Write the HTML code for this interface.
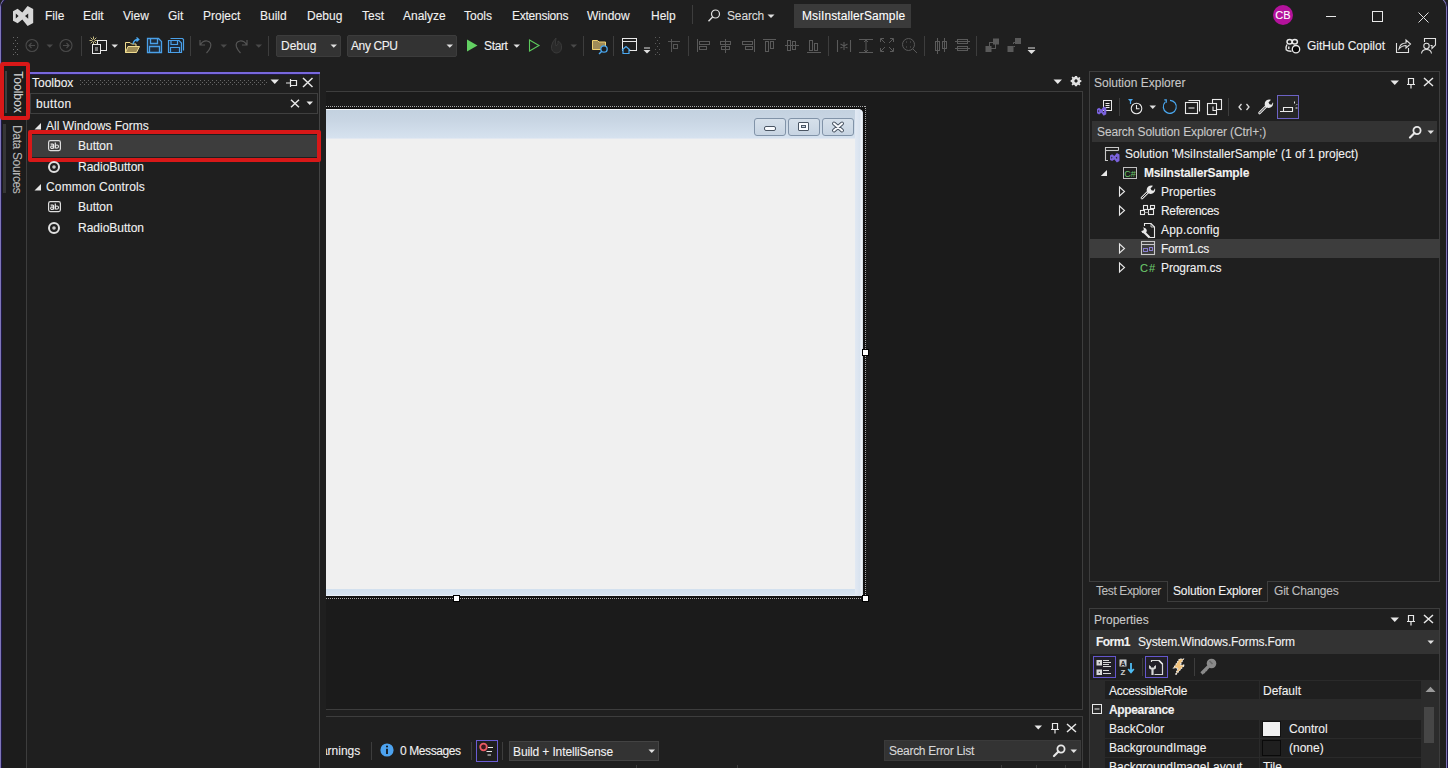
<!DOCTYPE html>
<html><head><meta charset="utf-8">
<style>
*{box-sizing:border-box;margin:0;padding:0}
html,body{width:1448px;height:768px;overflow:hidden;background:#1f1f1f;font-family:"Liberation Sans",sans-serif;font-size:12px;color:#f1f1f1}
.a{position:absolute}
.t{position:absolute;line-height:16px;white-space:nowrap;font-size:12px;-webkit-text-stroke:0.1px currentColor}
.ln{position:absolute;background:#3d3d3d}
svg{position:absolute;overflow:visible}
</style></head><body>

<!-- window border -->
<div class="a" style="left:0;top:-3px;width:20px;height:772px;border-left:1px solid #7f75b8;border-top:1px solid #7f75b8;border-top-left-radius:10px"></div>
<div class="a" style="left:1px;top:-2px;width:19px;height:771px;border-left:1px solid #1e1848;border-top:1px solid #1e1848;border-top-left-radius:9px"></div>
<div class="a" style="left:1427px;top:-3px;width:20px;height:772px;border-right:1px solid #7f75b8;border-top:1px solid #7f75b8;border-top-right-radius:10px"></div>
<div class="a" style="left:1428px;top:-3px;width:20px;height:772px;border-right:1px solid #1e1848;border-top:1px solid #1e1848;border-top-right-radius:10px;clip-path:inset(0 0 0 18px)"></div>

<!-- MENU BAR -->
<div id="menu">
  <svg style="left:0;top:0" width="40" height="30"><path fill="#d8d8d8" fill-rule="evenodd" d="M13 11.2 L17.6 8.8 L22.3 12.6 L27.6 6 L33.2 9 L33.2 23 L27.6 26 L22.3 19.6 L17.6 23.2 L13 20.8 Z M15.8 13.6 L18.6 16 L15.8 18.4 Z M28.2 13.4 L25 16 L28.2 18.8 Z"/></svg>
  <div class="t" style="left:45px;top:8px">File</div>
  <div class="t" style="left:83px;top:8px">Edit</div>
  <div class="t" style="left:123px;top:8px">View</div>
  <div class="t" style="left:168px;top:8px">Git</div>
  <div class="t" style="left:203px;top:8px">Project</div>
  <div class="t" style="left:260px;top:8px">Build</div>
  <div class="t" style="left:307px;top:8px">Debug</div>
  <div class="t" style="left:362px;top:8px">Test</div>
  <div class="t" style="left:403px;top:8px">Analyze</div>
  <div class="t" style="left:464px;top:8px">Tools</div>
  <div class="t" style="left:512px;top:8px;letter-spacing:-0.25px">Extensions</div>
  <div class="t" style="left:587px;top:8px">Window</div>
  <div class="t" style="left:651px;top:8px">Help</div>
  <div class="ln" style="left:692px;top:5px;width:1px;height:19px"></div>
  <svg style="left:706px;top:8px" width="16" height="16"><circle cx="9.5" cy="6" r="4" fill="none" stroke="#e0e0e0" stroke-width="1.2"/><path d="M6.6 9 L2.5 13.2" stroke="#e0e0e0" stroke-width="1.4"/></svg>
  <div class="t" style="left:727px;top:8px;letter-spacing:-0.15px;color:#dadada">Search</div>
  <svg style="left:767px;top:14px" width="8" height="5"><path d="M0.5 0.5 L7.5 0.5 L4 4 Z" fill="#e0e0e0"/></svg>
  <div class="a" style="left:794px;top:4px;width:117px;height:24px;background:#3a3a3a"></div>
  <div class="t" style="left:802px;top:8px;color:#fff;letter-spacing:0.1px">MsiInstallerSample</div>
  <div class="a" style="left:1273px;top:5px;width:20px;height:20px;border-radius:50%;background:#b4129c"></div>
  <div class="t" style="left:1273px;top:7px;width:20px;text-align:center;font-size:11px;color:#fff">CB</div>
  <div class="a" style="left:1326px;top:16px;width:10px;height:1px;background:#e8e8e8"></div>
  <div class="a" style="left:1372px;top:11px;width:11px;height:11px;border:1px solid #e8e8e8"></div>
  <svg style="left:1418px;top:12px" width="11" height="11"><path d="M0.5 0.5 L10.5 10.5 M10.5 0.5 L0.5 10.5" stroke="#e0e0e0" stroke-width="1"/></svg>
</div>

<!-- TOOLBAR -->
<div id="toolbar">
  <svg style="left:12px;top:36px" width="8" height="20">
    <g fill="#6a6a6a"><rect x="1" y="1" width="1" height="1"/><rect x="5" y="1" width="1" height="1"/><rect x="3" y="4" width="1" height="1"/><rect x="1" y="7" width="1" height="1"/><rect x="5" y="7" width="1" height="1"/><rect x="3" y="10" width="1" height="1"/><rect x="1" y="13" width="1" height="1"/><rect x="5" y="13" width="1" height="1"/><rect x="3" y="16" width="1" height="1"/><rect x="1" y="18" width="1" height="1"/><rect x="5" y="18" width="1" height="1"/></g>
  </svg>
  <svg style="left:24px;top:37px" width="18" height="18"><circle cx="8" cy="8.5" r="6" fill="none" stroke="#4a4a4a" stroke-width="1.1"/><path d="M11 8.5 L5 8.5 M7.5 6 L5 8.5 L7.5 11" fill="none" stroke="#4a4a4a" stroke-width="1.1"/></svg>
  <svg style="left:46px;top:44px" width="8" height="5"><path d="M0.5 0.5 L7 0.5 L3.75 3.8 Z" fill="#4a4a4a"/></svg>
  <svg style="left:58px;top:37px" width="18" height="18"><circle cx="8" cy="8.5" r="6" fill="none" stroke="#4a4a4a" stroke-width="1.1"/><path d="M5 8.5 L11 8.5 M8.5 6 L11 8.5 L8.5 11" fill="none" stroke="#4a4a4a" stroke-width="1.1"/></svg>
  <div class="ln" style="left:81px;top:36px;width:1px;height:20px"></div>
  <svg style="left:89px;top:36px" width="20" height="20">
    <path d="M4.5 0.5 V8.5 M0.5 4.5 H8.5 M1.7 1.7 L7.3 7.3 M7.3 1.7 L1.7 7.3" stroke="#f4e6a0" stroke-width="0.8"/><circle cx="4.5" cy="4.5" r="1.2" fill="#1f1f1f"/>
    <rect x="8.5" y="4.5" width="9" height="10" fill="#1f1f1f" stroke="#e8e8e8"/>
    <rect x="3.5" y="8.5" width="8" height="9" fill="#1f1f1f" stroke="#e8e8e8"/>
    <rect x="6" y="11" width="3" height="4" fill="#7a7a7a"/>
  </svg>
  <svg style="left:111px;top:44px" width="8" height="5"><path d="M0.5 0.5 L7 0.5 L3.75 3.8 Z" fill="#e0e0e0"/></svg>
  <svg style="left:123px;top:36px" width="20" height="20">
    <path d="M2.5 6.5 H7 L8.5 8 H13 V16.5 H2.5 Z" fill="#2a261c" stroke="#f0dc90"/>
    <path d="M2.5 16.5 L5 10.5 H16.5 L13.5 16.5 Z" fill="#9c8a55" stroke="#f0dc90"/>
    <path d="M10 8 Q11 3.5 15 3.5 M13.5 1.5 L15.8 3.5 L13.5 5.5" fill="none" stroke="#4aa8f0" stroke-width="1.3"/>
  </svg>
  <svg style="left:146px;top:37px" width="18" height="18">
    <path d="M1.5 1.5 H12.5 L15.5 4.5 V15.5 H1.5 Z" fill="#1f2a38" stroke="#4aa0e8" stroke-width="1.3"/>
    <path d="M4.5 1.5 V6.5 H11.5 V1.5 M3.5 15.5 V9.5 H13.5 V15.5" fill="none" stroke="#4aa0e8" stroke-width="1.3"/>
  </svg>
  <svg style="left:167px;top:37px" width="18" height="18">
    <path d="M3.5 1.5 H15.5 L16.5 2.5 V13.5" fill="none" stroke="#4aa0e8" stroke-width="1.2"/>
    <path d="M1.5 3.5 H12 L14.5 6 V15.5 H1.5 Z" fill="#1f2a38" stroke="#4aa0e8" stroke-width="1.2"/>
    <path d="M4 3.5 V7.5 H10.5 V3.5 M3.5 15.5 V10.5 H12.5 V15.5" fill="none" stroke="#4aa0e8" stroke-width="1.2"/>
  </svg>
  <div class="ln" style="left:190px;top:36px;width:1px;height:20px"></div>
  <svg style="left:197px;top:37px" width="18" height="18"><path d="M3 3 V8 H8 M3.5 7.5 Q6 3.5 10 4 Q15 5 13.5 10 Q12.5 13 9.5 16" fill="none" stroke="#555" stroke-width="1.2"/></svg>
  <svg style="left:220px;top:44px" width="8" height="5"><path d="M0.5 0.5 L7 0.5 L3.75 3.8 Z" fill="#4a4a4a"/></svg>
  <svg style="left:232px;top:37px" width="18" height="18"><path d="M15 3 V8 H10 M14.5 7.5 Q12 3.5 8 4 Q3 5 4.5 10 Q5.5 13 8.5 16" fill="none" stroke="#555" stroke-width="1.2"/></svg>
  <svg style="left:255px;top:44px" width="8" height="5"><path d="M0.5 0.5 L7 0.5 L3.75 3.8 Z" fill="#4a4a4a"/></svg>
  <div class="ln" style="left:268px;top:36px;width:1px;height:20px"></div>

  <div class="a" style="left:276px;top:35px;width:65px;height:22px;background:#333;border:1px solid #3c3c3c;border-radius:2px"></div>
  <div class="t" style="left:281px;top:38px">Debug</div>
  <svg style="left:330px;top:44px" width="8" height="5"><path d="M0.5 0.5 L7 0.5 L3.75 3.8 Z" fill="#e0e0e0"/></svg>
  <div class="a" style="left:347px;top:35px;width:110px;height:22px;background:#333;border:1px solid #3c3c3c;border-radius:2px"></div>
  <div class="t" style="left:351px;top:38px;letter-spacing:-0.4px">Any CPU</div>
  <svg style="left:446px;top:44px" width="8" height="5"><path d="M0.5 0.5 L7 0.5 L3.75 3.8 Z" fill="#e0e0e0"/></svg>
  <svg style="left:466px;top:39px" width="14" height="14"><path d="M1 0.5 L11.5 6.5 L1 12.5 Z" fill="#62d062"/></svg>
  <div class="t" style="left:484px;top:38px;letter-spacing:-0.35px">Start</div>
  <svg style="left:513px;top:44px" width="8" height="5"><path d="M0.5 0.5 L7 0.5 L3.75 3.8 Z" fill="#e0e0e0"/></svg>
  <svg style="left:528px;top:39px" width="14" height="14"><path d="M1.5 1 L11 6.5 L1.5 12 Z" fill="none" stroke="#5cc95c" stroke-width="1.1"/></svg>
  <svg style="left:549px;top:37px" width="16" height="18"><path d="M7 1 Q3 5 2.5 9 Q2 15 7 16 Q12 16 12.5 11 Q13 6 9 4 Q10 8 7 9 Q6 5 7 1 Z" fill="#2a2a2a" stroke="#3a3a3a"/></svg>
  <svg style="left:570px;top:44px" width="8" height="5"><path d="M0.5 0.5 L7 0.5 L3.75 3.8 Z" fill="#4a4a4a"/></svg>
  <div class="ln" style="left:583px;top:36px;width:1px;height:20px"></div>
  <svg style="left:591px;top:37px" width="20" height="20">
    <path d="M1.5 3.5 H6.5 L8 5 H14.5 V12.5 H1.5 Z" fill="#a08c58" stroke="#f0d070"/>
    <circle cx="13" cy="12" r="3.2" fill="#1f1f1f" stroke="#4aa8f0" stroke-width="1.3"/>
    <path d="M10.8 14.2 L8 17" stroke="#4aa8f0" stroke-width="1.4"/>
  </svg>
  <div class="ln" style="left:613px;top:36px;width:1px;height:20px"></div>
  <svg style="left:620px;top:37px" width="20" height="20">
    <rect x="2.5" y="1.5" width="14" height="12" fill="none" stroke="#e8e8e8"/>
    <path d="M2.5 4.5 H16.5" stroke="#e8e8e8"/>
    <path d="M2 13 L6 9.5 L10 13 M3 12.5 V16.5 H9 V12.5" fill="#1f1f1f" stroke="#4aa8f0" stroke-width="1.2"/>
  </svg>
  <svg style="left:643px;top:47px" width="8" height="8"><path d="M1 1 H7" stroke="#e0e0e0"/><path d="M0.5 3 L7.5 3 L4 6.5 Z" fill="#e0e0e0"/></svg>
  <svg style="left:654px;top:36px" width="8" height="20"><g fill="#5a5a5a"><rect x="1" y="1" width="1" height="1"/><rect x="5" y="1" width="1" height="1"/><rect x="3" y="4" width="1" height="1"/><rect x="1" y="7" width="1" height="1"/><rect x="5" y="7" width="1" height="1"/><rect x="3" y="10" width="1" height="1"/><rect x="1" y="13" width="1" height="1"/><rect x="5" y="13" width="1" height="1"/><rect x="3" y="16" width="1" height="1"/><rect x="1" y="18" width="1" height="1"/><rect x="5" y="18" width="1" height="1"/></g></svg>
  <svg style="left:666px;top:37px" width="18" height="18" fill="none" stroke="#555"><path d="M2 4.5 H14 M5.5 2 V15"/><rect x="7.5" y="7.5" width="4" height="4"/></svg>
  <div class="ln" style="left:688px;top:36px;width:1px;height:20px"></div>
  <g id="aligns"></g>
  <svg style="left:696px;top:37px" width="18" height="18" fill="none" stroke="#5a5a5a"><path d="M1.5 2 V15"/><rect x="3.5" y="4.5" width="10" height="3"/><rect x="3.5" y="9.5" width="7" height="3"/></svg>
  <svg style="left:718px;top:37px" width="18" height="18" fill="none" stroke="#5a5a5a"><path d="M7.5 2 V16"/><rect x="2.5" y="4.5" width="10" height="3"/><rect x="3.5" y="9.5" width="8" height="3"/></svg>
  <svg style="left:740px;top:37px" width="18" height="18" fill="none" stroke="#5a5a5a"><path d="M14.5 2 V15"/><rect x="2.5" y="4.5" width="10" height="3"/><rect x="5.5" y="9.5" width="7" height="3"/></svg>
  <svg style="left:762px;top:37px" width="18" height="18" fill="none" stroke="#5a5a5a"><path d="M1 2.5 H14"/><rect x="3.5" y="4.5" width="3" height="10"/><rect x="8.5" y="4.5" width="3" height="7"/></svg>
  <svg style="left:784px;top:37px" width="18" height="18" fill="none" stroke="#5a5a5a"><path d="M1 8.5 H15"/><rect x="3.5" y="3.5" width="3" height="10"/><rect x="8.5" y="4.5" width="3" height="8"/></svg>
  <svg style="left:806px;top:37px" width="18" height="18" fill="none" stroke="#5a5a5a"><path d="M1 15.5 H15"/><rect x="3.5" y="3.5" width="3" height="10"/><rect x="8.5" y="6.5" width="3" height="7"/></svg>
  <div class="ln" style="left:828px;top:36px;width:1px;height:20px"></div>
  <svg style="left:836px;top:37px" width="18" height="18" fill="none" stroke="#5a5a5a"><path d="M1.5 3 V15 M14.5 3 V15 M8 5 V13 M4.5 7 L11.5 11 M11.5 7 L4.5 11" stroke-width="1.1"/></svg>
  <svg style="left:858px;top:37px" width="18" height="18" fill="none" stroke="#5a5a5a"><path d="M1 2.5 H15 M1 15.5 H15 M8 3 V15 M6 5 L8 3 L10 5 M6 13 L8 15 L10 13"/></svg>
  <svg style="left:879px;top:37px" width="18" height="18" fill="none" stroke="#5a5a5a"><path d="M1.5 5 V1.5 H5 M11 1.5 H14.5 V5 M14.5 11 V14.5 H11 M5 14.5 H1.5 V11 M2 2 L6 6 M14 2 L10 6 M14 14 L10 10 M2 14 L6 10"/></svg>
  <svg style="left:901px;top:37px" width="18" height="18" fill="none" stroke="#5a5a5a"><circle cx="7.5" cy="7.5" r="6"/><path d="M12 12 L16 16 M5 5 H6 M9 5 H10 M5 10 H6 M9 10 H10" /></svg>
  <div class="ln" style="left:924px;top:36px;width:1px;height:20px"></div>
  <svg style="left:933px;top:37px" width="18" height="18" fill="none" stroke="#5a5a5a"><rect x="2.5" y="4.5" width="4" height="9"/><rect x="9.5" y="4.5" width="4" height="7"/><path d="M4.5 1 V17 M11.5 1 V15"/></svg>
  <svg style="left:954px;top:37px" width="18" height="18" fill="none" stroke="#5a5a5a"><rect x="3.5" y="2.5" width="10" height="4"/><rect x="3.5" y="9.5" width="10" height="4"/><path d="M1 4.5 H16 M1 11.5 H16"/></svg>
  <div class="ln" style="left:976px;top:36px;width:1px;height:20px"></div>
  <svg style="left:984px;top:37px" width="18" height="18"><rect x="9" y="1.5" width="6" height="6" fill="#5a5a5a"/><rect x="1.5" y="9" width="6" height="6" fill="#5a5a5a"/><rect x="5.5" y="5.5" width="6" height="6" fill="none" stroke="#5a5a5a"/></svg>
  <svg style="left:1006px;top:37px" width="18" height="18"><rect x="9" y="1" width="6" height="6" fill="#5a5a5a"/><rect x="1.5" y="9" width="6" height="6" fill="#5a5a5a"/><path d="M7.5 7 V5.5 H9 M9 9.5 H7.5" fill="none" stroke="#5a5a5a"/></svg>
  <svg style="left:1027px;top:47px" width="10" height="8"><path d="M1 1 H8" stroke="#e0e0e0"/><path d="M0.5 3 L8.5 3 L4.5 7 Z" fill="#e0e0e0"/></svg>

  <svg style="left:1284px;top:38px" width="20" height="20">
    <ellipse cx="5.6" cy="3.8" rx="2.6" ry="2.3" fill="none" stroke="#e8e8e8" stroke-width="1.5"/>
    <ellipse cx="10.8" cy="3.8" rx="2.6" ry="2.3" fill="none" stroke="#e8e8e8" stroke-width="1.5"/>
    <path d="M3 6.5 Q1.2 9.5 2.2 11.8 Q3.6 13.3 7.5 13.2 M4.8 8.5 V11" fill="none" stroke="#e8e8e8" stroke-width="1.4"/>
    <circle cx="12" cy="11.2" r="3.7" fill="#050505" stroke="#e8e8e8" stroke-width="1.3"/>
  </svg>
  <div class="t" style="left:1307px;top:38px">GitHub Copilot</div>
  <svg style="left:1395px;top:37px" width="18" height="18" fill="none" stroke="#e0e0e0" stroke-width="1.1"><path d="M1.5 6 V15.5 H13.5 V11"/><path d="M4 12 Q5 6 11 6 V3 L15.5 7 L11 11 V8.5 Q7 8.5 4 12 Z"/></svg>
  <svg style="left:1420px;top:37px" width="18" height="18" fill="none" stroke="#e0e0e0" stroke-width="1.1"><path d="M4.5 5 V1.5 H15.5 V8 L12 11.5 V8.5 H10.5"/><circle cx="6.5" cy="9" r="2.7"/><path d="M1.5 16.5 Q2 12.5 6.5 12.5 Q11 12.5 11.5 16.5"/></svg>
</div>

<!-- LEFT TAB STRIP -->
<div class="a" style="left:2px;top:62px;width:24px;height:706px;background:#1c1c1c"></div>
<div class="a" style="left:5px;top:71px;width:2px;height:42px;background:#3f3f3f"></div>
<div class="a" style="left:3px;top:124px;width:3px;height:69px;background:#363636"></div>
<div class="t" style="left:-3px;top:84px;width:42px;text-align:center;transform:rotate(90deg);color:#d0d0d0">Toolbox</div>
<div class="t" style="left:-17px;top:151px;width:68px;text-align:center;transform:rotate(90deg);color:#b8b8b8;letter-spacing:-0.35px">Data Sources</div>

<!-- TOOLBOX -->
<div class="a" style="left:26px;top:72px;width:294px;height:696px;background:#1f1f1f;border-left:1px solid #3d3d3d;border-right:1px solid #444"></div>
<div class="a" style="left:26px;top:72px;width:294px;height:2px;background:#7868dc"></div>
<div class="a" style="left:27px;top:74px;width:292px;height:1px;background:#221c48"></div>
<div class="t" style="left:32px;top:75px">Toolbox</div>
<svg style="left:80px;top:79px" width="190" height="8"><defs><pattern id="dp" width="4" height="4" patternUnits="userSpaceOnUse"><rect x="0" y="1" width="1" height="1" fill="#666"/><rect x="2" y="3" width="1" height="1" fill="#666"/></pattern></defs><rect x="0" y="0" width="188" height="7" fill="url(#dp)"/></svg>
<svg style="left:270px;top:79px" width="10" height="6"><path d="M0.5 0.5 L9 0.5 L4.75 5 Z" fill="#e8e8e8"/></svg>
<svg style="left:285px;top:77px" width="14" height="12" fill="none" stroke="#e8e8e8" stroke-width="1.2"><path d="M1 6 H5 M5.5 2 V10 M5.5 3.5 H11.5 V8.5 H5.5"/></svg>
<svg style="left:302px;top:77px" width="12" height="11"><path d="M1 1 L10.5 10 M10.5 1 L1 10" stroke="#e8e8e8" stroke-width="1.5"/></svg>
<div class="a" style="left:30px;top:93px;width:288px;height:21px;border:1px solid #3f3f3f"></div>
<div class="t" style="left:36px;top:96px;letter-spacing:0.35px">button</div>
<svg style="left:290px;top:99px" width="10" height="9"><path d="M1 0.8 L9 8.2 M9 0.8 L1 8.2" stroke="#e8e8e8" stroke-width="1.5"/></svg>
<svg style="left:306px;top:101px" width="8" height="5"><path d="M0.5 0.5 L7 0.5 L3.75 4 Z" fill="#e8e8e8"/></svg>

<svg style="left:34px;top:122px" width="8" height="8"><path d="M7 1 L7 7.5 L0.5 7.5 Z" fill="#e8e8e8"/></svg>
<div class="t" style="left:46px;top:118px">All Windows Forms</div>
<div class="a" style="left:30px;top:135px;width:289px;height:22px;background:#3d3d3d"></div>
<svg style="left:47px;top:139px" width="16" height="14"><rect x="1.6" y="1.6" width="11.8" height="10" rx="1.8" fill="none" stroke="#dedede" stroke-width="1.2"/><path d="M3.6 5.2 H5.8 Q6.6 5.2 6.6 6.2 V9.6" fill="none" stroke="#e8e8e8" stroke-width="1.2"/><circle cx="5" cy="8.2" r="1.35" fill="none" stroke="#e8e8e8" stroke-width="1.1"/><path d="M8.3 3.4 V9.6" stroke="#e8e8e8" stroke-width="1.2"/><circle cx="9.9" cy="7.6" r="1.6" fill="none" stroke="#e8e8e8" stroke-width="1.1"/></svg>
<div class="t" style="left:78px;top:138px">Button</div>
<div class="a" style="left:28px;top:130px;width:293px;height:32px;border:4px solid #d81818;border-radius:2px"></div>
<svg style="left:47px;top:160px" width="14" height="14"><circle cx="7" cy="7" r="5" fill="none" stroke="#e0e0e0" stroke-width="2"/><circle cx="7" cy="7" r="1.8" fill="#c8c8c8"/></svg>
<div class="t" style="left:78px;top:159px">RadioButton</div>
<svg style="left:34px;top:183px" width="8" height="8"><path d="M7 1 L7 7.5 L0.5 7.5 Z" fill="#e8e8e8"/></svg>
<div class="t" style="left:46px;top:179px;letter-spacing:0.15px">Common Controls</div>
<svg style="left:47px;top:200px" width="16" height="14"><rect x="1.6" y="1.6" width="11.8" height="10" rx="1.8" fill="none" stroke="#dedede" stroke-width="1.2"/><path d="M3.6 5.2 H5.8 Q6.6 5.2 6.6 6.2 V9.6" fill="none" stroke="#e8e8e8" stroke-width="1.2"/><circle cx="5" cy="8.2" r="1.35" fill="none" stroke="#e8e8e8" stroke-width="1.1"/><path d="M8.3 3.4 V9.6" stroke="#e8e8e8" stroke-width="1.2"/><circle cx="9.9" cy="7.6" r="1.6" fill="none" stroke="#e8e8e8" stroke-width="1.1"/></svg>
<div class="t" style="left:78px;top:199px">Button</div>
<svg style="left:47px;top:221px" width="14" height="14"><circle cx="7" cy="7" r="5" fill="none" stroke="#e0e0e0" stroke-width="2"/><circle cx="7" cy="7" r="1.8" fill="#c8c8c8"/></svg>
<div class="t" style="left:78px;top:220px">RadioButton</div>

<div class="a" style="left:0;top:62px;width:30px;height:58px;border:4px solid #d81818;border-radius:3px"></div>

<!-- DOC WELL -->
<svg style="left:1053px;top:79px" width="10" height="6"><path d="M0.5 0.5 L9 0.5 L4.75 5 Z" fill="#e8e8e8"/></svg>
<svg style="left:1069px;top:74px" width="14" height="14"><g transform="translate(7 7) scale(0.82)"><path fill="#e0e0e0" fill-rule="evenodd" d="M-1.3 -6.2 H1.3 L1.6 -4.5 L2.9 -3.9 L4.3 -4.9 L5.4 -3.8 L4.5 -2.4 L5 -1.1 L6.5 -0.8 V1.3 L5 1.6 L4.5 2.9 L5.4 4.3 L4.3 5.4 L2.9 4.5 L1.6 5 L1.3 6.5 H-1.3 L-1.6 5 L-2.9 4.5 L-4.3 5.4 L-5.4 4.3 L-4.5 2.9 L-5 1.6 L-6.5 1.3 V-1.3 L-5 -1.6 L-4.5 -2.9 L-5.4 -4.3 L-4.3 -5.4 L-2.9 -4.5 L-1.6 -5 Z M0 -2 A2 2 0 1 0 0.01 -2 Z"/></g></svg>
<div class="a" style="left:326px;top:91px;width:757px;height:619px;background:#1b1b1b;border-top:1px solid #3d3d3d;border-right:1px solid #3d3d3d;border-bottom:1px solid #3d3d3d"></div>
<!-- form selection dotted -->
<div class="a" style="left:326px;top:106px;width:540px;height:1px;background:repeating-linear-gradient(90deg,#ababab 0 1px,#121212 1px 2px)"></div>
<div class="a" style="left:326px;top:107px;width:539px;height:2px;background:#121212"></div>
<div class="a" style="left:865px;top:106px;width:1px;height:493px;background:repeating-linear-gradient(180deg,#ababab 0 1px,#121212 1px 2px)"></div>
<div class="a" style="left:863px;top:107px;width:2px;height:491px;background:#121212"></div>
<div class="a" style="left:326px;top:598px;width:540px;height:1px;background:repeating-linear-gradient(90deg,#ababab 0 1px,#121212 1px 2px)"></div>
<div class="a" style="left:326px;top:596px;width:539px;height:2px;background:#121212"></div>
<!-- form -->
<div class="a" style="left:326px;top:109px;width:537px;height:487px;border-top-right-radius:5px;overflow:hidden;background:linear-gradient(90deg,#d0dcea 0,#dbe5f1 100%)">
  <div class="a" style="left:0;top:0;width:537px;height:1px;background:#f4f7fb"></div>
  <div class="a" style="left:0;top:1px;width:537px;height:28px;background:linear-gradient(180deg,#c3d1df 0,#c9d6e4 40%,#d6e2ef 100%)"></div>
  <div class="a" style="left:529px;top:1px;width:8px;height:486px;background:linear-gradient(90deg,#e2e9f3,#d9e3ef 60%,#f4f7fb 88%,#bcc6d2 100%)"></div>
  <div class="a" style="left:0;top:480px;width:529px;height:7px;background:linear-gradient(180deg,#d2e0ee,#d8e4f1 80%,#f4f7fb 100%)"></div>
  <div class="a" style="left:0;top:29px;width:529px;height:451px;background:#f0f0f0;border-top:1px solid #e2e8f1"></div>
  <!-- caption buttons -->
  <div class="a" style="left:428px;top:9px;width:32px;height:18px;border:1px solid #8193a8;border-radius:3px;background:linear-gradient(180deg,#d6e0ea,#c7d4e2)"></div>
  <div class="a" style="left:438px;top:17px;width:12px;height:5px;border:1px solid #4a5563;border-radius:2px;background:#fafcff"></div>
  <div class="a" style="left:462px;top:9px;width:32px;height:18px;border:1px solid #8193a8;border-radius:3px;background:linear-gradient(180deg,#d6e0ea,#c7d4e2)"></div>
  <div class="a" style="left:472px;top:13px;width:11px;height:9px;border:1px solid #4a5563;border-radius:1px;background:#fafcff"></div>
  <div class="a" style="left:475px;top:16px;width:5px;height:3px;border:1px solid #4a5563;background:#c8d4e2"></div>
  <div class="a" style="left:496px;top:9px;width:32px;height:18px;border:1px solid #8193a8;border-radius:3px;background:linear-gradient(180deg,#d6e0ea,#c7d4e2)"></div>
  <svg style="left:506px;top:13px" width="12" height="10"><path d="M2 1.5 L10 8.5 M10 1.5 L2 8.5" stroke="#4a5563" stroke-width="4" stroke-linecap="round"/><path d="M2 1.5 L10 8.5 M10 1.5 L2 8.5" stroke="#fafcff" stroke-width="2" stroke-linecap="round"/></svg>
</div>
<!-- handles -->
<div class="a" style="left:862px;top:349px;width:7px;height:7px;border:1px solid #000;background:#fff"></div>
<div class="a" style="left:453px;top:595px;width:7px;height:7px;border:1px solid #000;background:#fff"></div>
<div class="a" style="left:862px;top:595px;width:7px;height:7px;border:1px solid #000;background:#fff"></div>

<!-- ERROR LIST -->
<div class="a" style="left:326px;top:716px;width:757px;height:52px;background:#1f1f1f;border-top:1px solid #3d3d3d;border-right:1px solid #3d3d3d"></div>
<svg style="left:1034px;top:725px" width="9" height="5"><path d="M0.5 0.5 L8 0.5 L4.25 4.5 Z" fill="#e8e8e8"/></svg>
<svg style="left:1050px;top:722px" width="10" height="12" fill="none" stroke="#e8e8e8" stroke-width="1.2"><path d="M2.5 1.5 H7.5 V7.5 H2.5 Z M1 7.5 H9 M5 7.5 V11.5"/></svg>
<svg style="left:1066px;top:723px" width="11" height="10"><path d="M1 1 L10 9 M10 1 L1 9" stroke="#e8e8e8" stroke-width="1.5"/></svg>
<div class="a" style="left:326px;top:740px;width:40px;height:20px;overflow:hidden"><div class="t" style="left:-16px;top:3px">Warnings</div></div>
<div class="ln" style="left:371px;top:742px;width:1px;height:18px"></div>
<svg style="left:380px;top:743px" width="15" height="15"><circle cx="7" cy="7" r="6.6" fill="#4da3f0"/><path d="M7 5.8 V11" stroke="#111" stroke-width="1.7"/><circle cx="7" cy="3.6" r="1" fill="#111"/></svg>
<div class="t" style="left:400px;top:743px;letter-spacing:-0.4px">0 Messages</div>
<div class="ln" style="left:471px;top:742px;width:1px;height:18px"></div>
<div class="a" style="left:476px;top:740px;width:22px;height:22px;border:1px solid #6a5cd4"></div>
<svg style="left:477px;top:741px" width="20" height="20"><circle cx="6.5" cy="6" r="3.3" fill="#3a1a1e" stroke="#ec5a64" stroke-width="1.8"/><path d="M11 6.5 H16 M9.5 10.5 H15 M10.5 14 H14" stroke="#e8e8e8" stroke-width="1.1"/></svg>
<div class="ln" style="left:502px;top:742px;width:1px;height:18px"></div>
<div class="a" style="left:509px;top:741px;width:150px;height:20px;background:#333;border:1px solid #434343"></div>
<div class="t" style="left:513px;top:744px;letter-spacing:-0.12px">Build + IntelliSense</div>
<svg style="left:648px;top:749px" width="8" height="5"><path d="M0.5 0.5 L7 0.5 L3.75 4 Z" fill="#e0e0e0"/></svg>
<div class="a" style="left:884px;top:740px;width:197px;height:21px;background:#333;border:1px solid #3a3a3a"></div>
<div class="t" style="left:889px;top:743px;color:#d8d8d8;letter-spacing:-0.3px">Search Error List</div>
<svg style="left:1052px;top:743px" width="16" height="16"><circle cx="9" cy="6" r="3.6" fill="none" stroke="#e8e8e8" stroke-width="1.8"/><path d="M6.5 8.5 L2 13" stroke="#e8e8e8" stroke-width="2.2" stroke-linecap="round"/></svg>
<svg style="left:1070px;top:749px" width="8" height="5"><path d="M0.5 0.5 L7 0.5 L3.75 4 Z" fill="#e0e0e0"/></svg>
<div class="ln" style="left:636px;top:765px;width:1px;height:3px"></div>
<div class="ln" style="left:737px;top:765px;width:1px;height:3px"></div>
<div class="ln" style="left:1001px;top:765px;width:1px;height:3px"></div>
<div class="ln" style="left:1036px;top:765px;width:1px;height:3px"></div>
<div class="ln" style="left:1065px;top:765px;width:1px;height:3px"></div>

<!-- SOLUTION EXPLORER -->
<div class="a" style="left:1089px;top:71px;width:351px;height:511px;border:1px solid #3d3d3d;background:#1f1f1f"></div>
<div class="t" style="left:1094px;top:75px;color:#c8c8c8">Solution Explorer</div>
<svg style="left:1390px;top:80px" width="10" height="6"><path d="M0.5 0.5 L9 0.5 L4.75 5 Z" fill="#e8e8e8"/></svg>
<svg style="left:1406px;top:77px" width="10" height="12" fill="none" stroke="#e8e8e8" stroke-width="1.2"><path d="M2.5 1.5 H7.5 V7.5 H2.5 Z M1 7.5 H9 M5 7.5 V11.5"/></svg>
<svg style="left:1423px;top:77px" width="11" height="10"><path d="M1 1 L10 9 M10 1 L1 9" stroke="#e8e8e8" stroke-width="1.5"/></svg>
<!-- SE toolbar -->
<svg style="left:1096px;top:99px" width="18" height="20"><rect x="7.5" y="1.5" width="8" height="10" fill="#1f1f1f" stroke="#e8e8e8"/><path d="M9.5 4.5 H13.5 M9.5 6.5 H13.5 M9.5 8.5 H13.5" stroke="#e8e8e8"/><path transform="translate(1 7.5) scale(0.46)" fill="#7a62dc" fill-rule="evenodd" d="M0 5.2 L4.6 2.8 L9.3 6.6 L14.6 0 L20.2 3 L20.2 17 L14.6 20 L9.3 13.6 L4.6 17.2 L0 14.8 Z M2.8 7.6 L5.6 10 L2.8 12.4 Z M15.2 7.4 L12 10 L15.2 12.8 Z"/></svg>
<div class="ln" style="left:1119px;top:98px;width:1px;height:18px"></div>
<svg style="left:1127px;top:97px" width="18" height="20"><path d="M1 2 H6 L3.5 5 Z" fill="#4aa8f0"/><path d="M3.5 4 V7" stroke="#4aa8f0" stroke-width="1.2"/><circle cx="9.5" cy="11.5" r="5.3" fill="none" stroke="#e8e8e8" stroke-width="1.1"/><path d="M9.5 8 V11.8 H12.5" fill="none" stroke="#e8e8e8" stroke-width="1.1"/></svg>
<svg style="left:1149px;top:105px" width="8" height="5"><path d="M0.5 0.5 L7 0.5 L3.75 4 Z" fill="#e0e0e0"/></svg>
<svg style="left:1161px;top:98px" width="18" height="18"><path d="M4.2 4.2 A6.5 6.5 0 1 0 9 2.3" fill="none" stroke="#4aa8f0" stroke-width="1.2"/><path d="M3.3 1.8 H5.2 V4.8" fill="none" stroke="#4aa8f0" stroke-width="1.3"/></svg>
<svg style="left:1184px;top:98px" width="18" height="18" fill="none" stroke="#e8e8e8" stroke-width="1.1"><path d="M4.5 2.5 H15.5 V13.5"/><rect x="1.5" y="4.5" width="12" height="11" fill="#1f1f1f"/><path d="M4.5 10 H10.5"/></svg>
<svg style="left:1206px;top:98px" width="18" height="18" fill="none" stroke="#e8e8e8" stroke-width="1.1"><rect x="6.5" y="1.5" width="9" height="10"/><rect x="1.5" y="5.5" width="9" height="11" fill="#1f1f1f"/><path d="M7 8.5 V12.5 H10"/></svg>
<div class="ln" style="left:1228px;top:98px;width:1px;height:18px"></div>
<svg style="left:1237px;top:100px" width="14" height="14" fill="none" stroke="#dcdcdc" stroke-width="1.3"><path d="M4.5 4 L2 7 L4.5 10 M9.5 4 L12 7 L9.5 10"/></svg>
<svg style="left:1258px;top:98px" width="16" height="17"><path d="M1.5 15 L8 8.5" stroke="#e8e8e8" stroke-width="2.6" stroke-linecap="round"/><path d="M1.5 15 L8 8.5" stroke="#1f1f1f" stroke-width="0.9" stroke-linecap="round"/><path d="M7.3 8.7 Q5.7 5 8.3 2.6 Q10.6 0.8 13 1.8 L10.5 4.5 L11.5 6.2 L13.5 6.8 L15 4.2 Q15.8 7.5 13 9.2 Q10.7 10.5 8.9 9.5 Z" fill="#e8e8e8"/></svg>
<div class="a" style="left:1277px;top:95px;width:22px;height:24px;border:1px solid #6c62c4;background:#262626"></div>
<svg style="left:1279px;top:98px" width="20" height="18"><path d="M1 13.5 H4.5 M4.5 13.5 V9.5 H13.5 V13.5 H4.5" fill="none" stroke="#eaeaea" stroke-width="1.1"/><path d="M15.5 3.5 V5.5 M17.2 7.2 L18.2 6.2 M16.5 10 H18.5" stroke="#eaeaea" stroke-width="1"/></svg>
<!-- SE search -->
<div class="a" style="left:1092px;top:121px;width:345px;height:21px;background:#333"></div>
<div class="t" style="left:1097px;top:124px;color:#c8c8c8;letter-spacing:-0.12px">Search Solution Explorer (Ctrl+;)</div>
<svg style="left:1408px;top:125px" width="16" height="16"><circle cx="9" cy="5.5" r="3.6" fill="none" stroke="#e8e8e8" stroke-width="1.8"/><path d="M6.5 8 L2 12.5" stroke="#e8e8e8" stroke-width="2.2" stroke-linecap="round"/></svg>
<svg style="left:1427px;top:130px" width="8" height="5"><path d="M0.5 0.5 L7 0.5 L3.75 4 Z" fill="#e0e0e0"/></svg>
<!-- tree -->
<svg style="left:1104px;top:146px" width="18" height="18"><path d="M1.5 12.5 V1.5 H14.5 V4.5 M1.5 12.5 V14.5 H4" fill="none" stroke="#c8c8c8" stroke-width="1.1"/><path d="M1.5 4.5 H14.5" stroke="#c8c8c8" stroke-width="1.1"/><rect x="5" y="6" width="12" height="11" fill="#1f1f1f"/><path transform="translate(6 7) scale(0.47)" fill="#7a62dc" fill-rule="evenodd" d="M0 5.2 L4.6 2.8 L9.3 6.6 L14.6 0 L20.2 3 L20.2 17 L14.6 20 L9.3 13.6 L4.6 17.2 L0 14.8 Z M2.8 7.6 L5.6 10 L2.8 12.4 Z M15.2 7.4 L12 10 L15.2 12.8 Z"/></svg>
<div class="t" style="left:1125px;top:146px">Solution 'MsiInstallerSample' (1 of 1 project)</div>
<svg style="left:1100px;top:169px" width="8" height="8"><path d="M7 1 L7 7 L0.8 7 Z" fill="#e8e8e8"/></svg>
<svg style="left:1122px;top:166px" width="16" height="14"><rect x="1.5" y="1.5" width="13" height="11" fill="none" stroke="#c0c0c0"/><text x="8" y="10.5" text-anchor="middle" font-family="Liberation Sans" font-size="9" fill="#6cc86c">C#</text></svg>
<div class="t" style="left:1144px;top:165px;font-weight:bold;letter-spacing:-0.2px">MsiInstallerSample</div>
<svg style="left:1118px;top:186px" width="8" height="12"><path d="M1.5 1 L6.5 5.5 L1.5 10 Z" fill="none" stroke="#e8e8e8" stroke-width="1.1"/></svg>
<svg style="left:1140px;top:184px" width="16" height="16"><path d="M2 14 L8 8" stroke="#d8d8d8" stroke-width="2.8" stroke-linecap="round"/><path d="M2 14 L8 8" stroke="#1f1f1f" stroke-width="1" stroke-linecap="round"/><path d="M7.3 8.7 Q5.7 5 8.3 2.6 Q10.6 0.8 13 1.8 L10.5 4.5 L11.5 6.2 L13.5 6.8 L15 4.2 Q15.8 7.5 13 9.2 Q10.7 10.5 8.9 9.5 Z" fill="#e8e8e8"/></svg>
<div class="t" style="left:1161px;top:184px">Properties</div>
<svg style="left:1118px;top:205px" width="8" height="12"><path d="M1.5 1 L6.5 5.5 L1.5 10 Z" fill="none" stroke="#e8e8e8" stroke-width="1.1"/></svg>
<svg style="left:1139px;top:203px" width="18" height="14" fill="none" stroke="#e8e8e8" stroke-width="1.1"><rect x="1.5" y="7.5" width="4" height="4"/><rect x="4.5" y="2.5" width="4" height="4"/><rect x="9.5" y="6.5" width="5" height="5"/><rect x="11.5" y="2.5" width="4" height="3"/><path d="M5.5 9.5 H9.5" stroke="#9a9a9a"/></svg>
<div class="t" style="left:1161px;top:203px;letter-spacing:-0.35px">References</div>
<svg style="left:1140px;top:222px" width="16" height="17"><path d="M4.5 4 V1.5 H11 L14.5 5 V15.5 H10" fill="none" stroke="#e8e8e8" stroke-width="1.1"/><path d="M11 1.5 V5 H14.5" fill="none" stroke="#e8e8e8" stroke-width="0.8"/><path d="M9 15 L5 11" stroke="#e8e8e8" stroke-width="2.4" stroke-linecap="round"/><path d="M5.5 11.5 Q2 12 1.2 9 L3.2 8.5 L4 7 L2.8 5.5 Q5.8 5.2 6.8 8 Q7 9.5 5.5 11.5 Z" fill="#e8e8e8"/></svg>
<div class="t" style="left:1161px;top:222px;letter-spacing:0.2px">App.config</div>
<div class="a" style="left:1090px;top:239px;width:349px;height:19px;background:#3d3d3d"></div>
<svg style="left:1118px;top:243px" width="8" height="12"><path d="M1.5 1 L6.5 5.5 L1.5 10 Z" fill="none" stroke="#e8e8e8" stroke-width="1.1"/></svg>
<svg style="left:1140px;top:240px" width="16" height="16"><rect x="1.5" y="1.5" width="13" height="13" fill="none" stroke="#c8c8c8" stroke-width="1.1"/><path d="M1.5 4.5 H14.5" stroke="#c8c8c8" stroke-width="1.1"/><rect x="3.5" y="8.5" width="4" height="3" fill="none" stroke="#8a7fd0"/><rect x="9.5" y="7.5" width="3" height="3" fill="none" stroke="#8a7fd0"/></svg>
<div class="t" style="left:1161px;top:241px;letter-spacing:-0.25px">Form1.cs</div>
<svg style="left:1118px;top:262px" width="8" height="12"><path d="M1.5 1 L6.5 5.5 L1.5 10 Z" fill="none" stroke="#e8e8e8" stroke-width="1.1"/></svg>
<div class="t" style="left:1140px;top:260px;color:#6cc86c;font-size:11px;letter-spacing:1px">C#</div>
<div class="t" style="left:1161px;top:260px;letter-spacing:-0.1px">Program.cs</div>

<!-- TAB STRIP -->
<div class="a" style="left:1089px;top:581px;width:351px;height:1px;background:#3d3d3d"></div>
<div class="a" style="left:1167px;top:581px;width:101px;height:21px;background:#1f1f1f;border:1px solid #3d3d3d;border-top:none"></div>
<div class="t" style="left:1096px;top:583px;color:#bdbdbd;letter-spacing:-0.4px">Test Explorer</div>
<div class="t" style="left:1173px;top:583px;color:#f1f1f1;letter-spacing:-0.15px">Solution Explorer</div>
<div class="t" style="left:1274px;top:583px;color:#bdbdbd;letter-spacing:-0.2px">Git Changes</div>

<!-- PROPERTIES -->
<div class="a" style="left:1089px;top:608px;width:351px;height:160px;border:1px solid #3d3d3d;border-bottom:none;background:#1f1f1f"></div>
<div class="t" style="left:1094px;top:612px;color:#c8c8c8">Properties</div>
<svg style="left:1390px;top:617px" width="10" height="6"><path d="M0.5 0.5 L9 0.5 L4.75 5 Z" fill="#e8e8e8"/></svg>
<svg style="left:1406px;top:614px" width="10" height="12" fill="none" stroke="#e8e8e8" stroke-width="1.2"><path d="M2.5 1.5 H7.5 V7.5 H2.5 Z M1 7.5 H9 M5 7.5 V11.5"/></svg>
<svg style="left:1423px;top:614px" width="11" height="10"><path d="M1 1 L10 9 M10 1 L1 9" stroke="#e8e8e8" stroke-width="1.5"/></svg>
<div class="a" style="left:1090px;top:630px;width:349px;height:24px;background:#333"></div>
<div class="t" style="left:1096px;top:634px;font-weight:bold;letter-spacing:-0.55px">Form1</div>
<div class="t" style="left:1138px;top:634px;letter-spacing:-0.15px">System.Windows.Forms.Form</div>
<svg style="left:1427px;top:640px" width="8" height="5"><path d="M0.5 0.5 L7 0.5 L3.75 4 Z" fill="#e0e0e0"/></svg>
<!-- props toolbar -->
<div class="a" style="left:1093px;top:656px;width:23px;height:22px;border:1px solid #6456cc;background:#222028"></div>
<svg style="left:1094px;top:657px" width="22" height="20">
  <rect x="2.5" y="3" width="5.5" height="5.5" fill="#d8d8d8"/><rect x="4.7" y="5.2" width="1.2" height="1.2" fill="#222"/>
  <rect x="2.5" y="12.5" width="5.5" height="5.5" fill="#d8d8d8"/><rect x="4.7" y="14.7" width="1.2" height="1.2" fill="#222"/>
  <path d="M9 3.5 H15 M9 5.5 H17 M9 7.5 H15 M9 9.5 H17 M9 13.5 H15 M9 16.5 H17" stroke="#d8d8d8" stroke-width="1"/>
</svg>
<svg style="left:1119px;top:657px" width="18" height="20">
  <rect x="0.5" y="2.5" width="7" height="7" fill="#cfcfcf"/>
  <text x="4" y="8.6" text-anchor="middle" font-family="Liberation Sans" font-size="7" font-weight="bold" fill="#222">A</text>
  <text x="4" y="18" text-anchor="middle" font-family="Liberation Sans" font-size="8" font-weight="bold" fill="#cfcfcf">Z</text>
  <path d="M12 6 V15 M9.2 12 L12 15.3 L14.8 12" fill="none" stroke="#4ebcf4" stroke-width="1.8"/>
</svg>
<div class="ln" style="left:1142px;top:658px;width:1px;height:18px"></div>
<div class="a" style="left:1145px;top:656px;width:23px;height:22px;border:1px solid #6456cc;background:#222028"></div>
<svg style="left:1146px;top:657px" width="22" height="20"><path d="M5.5 5 V3.5 H13 L16.5 7 V17.5 H8.5" fill="none" stroke="#d8d8d8" stroke-width="1.2"/><path d="M13 3.5 L16.5 7" stroke="#e8e8e8" stroke-width="1.6"/><path d="M6.5 18 V12" stroke="#d8d8d8" stroke-width="2.2"/><path d="M3 8 V10.5 Q3 12.5 6.5 12.5 Q10 12.5 10 10.5 V8 L8 9.5 V10.5 H5 V9.5 Z" fill="#d8d8d8"/></svg>
<svg style="left:1171px;top:657px" width="16" height="20"><path d="M8.5 2 L2.5 11 H7 L4.5 18 L13.5 8 H9 L12.5 2 Z" fill="#f2c27a" stroke="#f0f0f0" stroke-width="1.1" stroke-dasharray="1.6 1"/></svg>
<div class="ln" style="left:1194px;top:658px;width:1px;height:18px"></div>
<svg style="left:1199px;top:657px" width="20" height="20"><circle cx="12.5" cy="6.5" r="4.8" fill="#8a8a8a"/><path d="M10.5 4 L13.5 7" stroke="#6a6a6a" stroke-width="1.6"/><path d="M9.5 9.5 L2.5 16.5" stroke="#8a8a8a" stroke-width="3.2"/><path d="M4.5 14.5 L6 16 M6.5 12.5 L8 14" stroke="#8a8a8a" stroke-width="1.2"/></svg>
<!-- grid -->
<div class="a" style="left:1090px;top:680px;width:334px;height:88px;background:#2a2a2a"></div>
<div class="a" style="left:1105px;top:681px;width:316px;height:18px;background:#1f1f1f"></div>
<div class="a" style="left:1105px;top:720px;width:316px;height:18px;background:#1f1f1f"></div>
<div class="a" style="left:1105px;top:739px;width:316px;height:18px;background:#1f1f1f"></div>
<div class="a" style="left:1105px;top:758px;width:316px;height:10px;background:#1f1f1f"></div>
<div class="a" style="left:1259px;top:681px;width:1px;height:18px;background:#2a2a2a"></div>
<div class="a" style="left:1259px;top:720px;width:1px;height:48px;background:#2a2a2a"></div>
<div class="t" style="left:1109px;top:683px;letter-spacing:-0.28px">AccessibleRole</div>
<div class="t" style="left:1263px;top:683px">Default</div>
<svg style="left:1092px;top:704px" width="11" height="11"><rect x="0.5" y="0.5" width="9" height="9" fill="none" stroke="#e8e8e8"/><path d="M2.5 5 H7.5" stroke="#e8e8e8"/></svg>
<div class="t" style="left:1109px;top:702px;font-weight:bold;letter-spacing:-0.35px">Appearance</div>
<div class="t" style="left:1109px;top:721px">BackColor</div>
<div class="a" style="left:1262px;top:721px;width:19px;height:16px;background:#f0f0f0;border:1px solid #111"></div>
<div class="t" style="left:1289px;top:721px">Control</div>
<div class="t" style="left:1109px;top:740px">BackgroundImage</div>
<div class="a" style="left:1262px;top:740px;width:19px;height:16px;background:#1f1f1f;border:1px solid #0a0a0a"></div>
<div class="t" style="left:1289px;top:740px">(none)</div>
<div class="t" style="left:1109px;top:759px">BackgroundImageLayout</div>
<div class="t" style="left:1263px;top:759px">Tile</div>
<!-- scrollbar -->
<div class="a" style="left:1421px;top:680px;width:18px;height:88px;background:#2b2b2b"></div>
<svg style="left:1425px;top:686px" width="11" height="7"><path d="M0.5 6 L10.5 6 L5.5 0.8 Z" fill="#9a9a9a"/></svg>
<div class="a" style="left:1424px;top:707px;width:10px;height:36px;background:#464646"></div>

</body></html>
